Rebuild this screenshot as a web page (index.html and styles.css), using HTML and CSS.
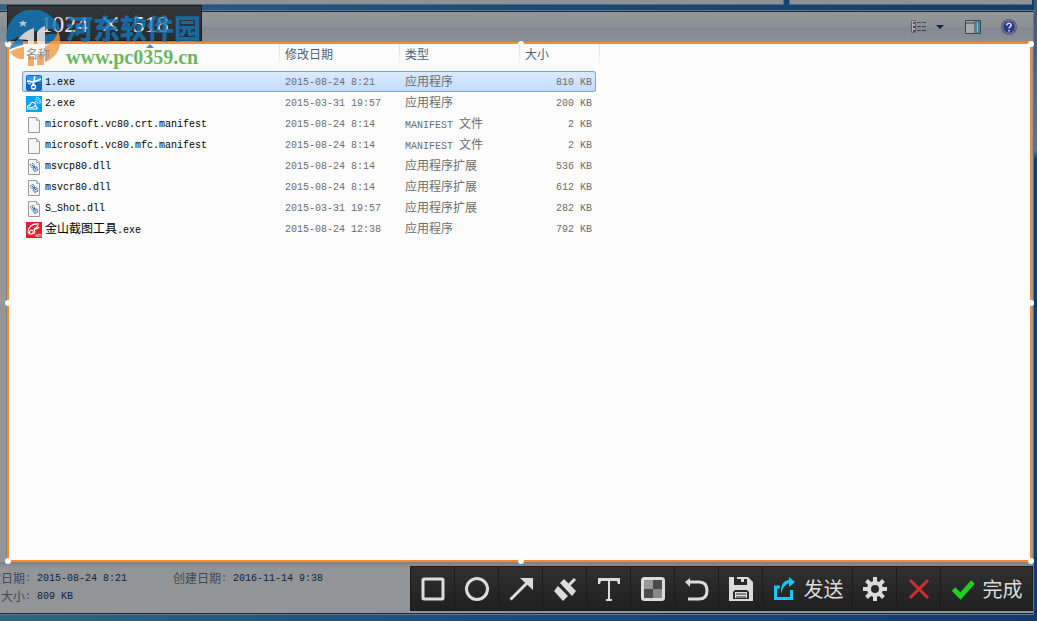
FILE: index.html
```html
<!DOCTYPE html>
<html lang="zh-CN">

<head>
    <meta charset="UTF-8">
    <meta name="viewport" content="width=device-width, initial-scale=1.0">
    <title>金山截图工具</title>
    <link rel="stylesheet" href="styles.css">
</head>

<body>
    <svg class="symbols" aria-hidden="true">
        <symbol id="page" viewBox="0 0 16 16">
            <path d="M2.500 .5h8l3 3v12h-11z" fill="#f7f7f7" stroke="#999" />
            <path d="M10.500 .5v3h3" fill="#ddd" stroke="#aaa" />
        </symbol>
        <symbol id="dll" viewBox="0 0 16 16">
            <path d="M2.500 .5h8l3 3v12h-11z" fill="#f7f7f7" stroke="#999" />
            <path d="M10.500 .5v3h3" fill="#ddd" stroke="#aaa" />
            <circle cx="6.500" cy="6.500" r="2" fill="#d5e8f7" stroke="#40709f" stroke-dasharray="2 .6" />
            <circle cx="9.500" cy="10" r="2.300" fill="#b5d3ee" stroke="#315f91" stroke-dasharray="2 .6" />
            <path d="M6 6l4 4" stroke="#315f91" />
        </symbol>
    </svg>

    <div class="behind">
        <div class="pane pane-left"></div>
        <div class="pane pane-right"></div>
    </div>

    <div class="window">
        <div class="command-bar">
            <button class="bar-btn" aria-label="更改视图">
                <svg width="34" height="16" viewBox="0 0 34 16">
                    <rect x=".5" y="1.500" width="4" height="12" rx="1" fill="#a9adb2" stroke="#555f70" />
                    <path d="M2 3h2v2H2z" fill="#287044" />
                    <path d="M2 7h2v2H2z" fill="#a32222" />
                    <path d="M2 11h2v2H2z" fill="#284f96" />
                    <path d="M6 3.500h4m1 0h4M6 7.500h4m1 0h4M6 11.500h4m1 0h4" stroke="#3d4856" />
                    <path d="M25 6h8l-4 4z" fill="#10273f" />
                </svg>
            </button>
            <button class="bar-btn" aria-label="显示预览窗格">
                <svg width="16" height="16" viewBox="0 0 16 16">
                    <path d="M.5 1.500h15v13H.5z" fill="#aaa" stroke="#35475a" />
                    <path d="M1 4h9M10 2v12" stroke="#35475a" />
                    <path d="M11 2h4v12h-4z" fill="#4a8798" />
                    <path d="M12 4h1v9h-1z" fill="#8cb9c2" />
                </svg>
            </button>
            <button class="bar-btn" aria-label="帮助">
                <svg width="16" height="16" viewBox="0 0 16 16">
                    <circle cx="8" cy="8" r="7.300" fill="#26398e" stroke="#62636a" stroke-width="1.400" />
                    <circle cx="8" cy="8" r="6.200" fill="none" stroke="#9499a5" stroke-width=".8" />
                    <path d="M5.800 6.300Q6 4.300 8 4.300T10.200 6.100Q10.200 7.200 8.900 7.900Q8 8.400 8 9.600M8 11v1.500" fill="none" stroke="#dde" stroke-width="1.600" />
                </svg>
            </button>
        </div>

        <div class="content">
            <div class="nav-edge"></div>
            <div class="selection">
                <table class="files">
                    <thead>
                        <tr>
                            <th class="col-name">名称<span class="sort"></span></th>
                            <th class="col-date">修改日期</th>
                            <th class="col-type">类型</th>
                            <th class="col-size">大小</th>
                        </tr>
                    </thead>
                    <tbody>
                        <tr class="selected">
                            <td><div class="file">
                                <svg class="app-icon" viewBox="0 0 16 16">
                                    <rect width="16" height="16" rx="2" fill="#1267c2" />
                                    <path d="M1 1h14v6H1z" fill="#2f9de8" />
                                    <path d="M1 6l6 1 1 4M15 4L8 7M9 1L7 10" fill="none" stroke="#fff" stroke-width="1.500" />
                                    <circle cx="3.500" cy="7.500" r="1.500" fill="none" stroke="#fff" />
                                    <circle cx="7.500" cy="12" r="2" fill="none" stroke="#fff" stroke-width="1.300" />
                                </svg>1.exe</div></td>
                            <td>2015-08-24 8:21</td>
                            <td><span class="zh">应用程序</span></td>
                            <td>810 KB</td>
                        </tr>
                        <tr>
                            <td><div class="file">
                                <svg class="app-icon" viewBox="0 0 16 16">
                                    <rect width="16" height="16" fill="#08a2ef" />
                                    <path d="M2 13q-2-3 2-4 1-4 5-2 1 2 0 3 3 1 2 3zM3 11q4 2 7-2" fill="none" stroke="#fff" stroke-width="1.200" />
                                    <path d="M9 5q3 0 3 3M9 3q5 0 5 5M10 1q5 1 5 6" fill="none" stroke="#d8f3ff" stroke-width=".8" />
                                </svg>2.exe</div></td>
                            <td>2015-03-31 19:57</td>
                            <td><span class="zh">应用程序</span></td>
                            <td>200 KB</td>
                        </tr>
                        <tr>
                            <td><div class="file"><svg class="app-icon"><use href="#page" /></svg>microsoft.vc80.crt.manifest</div></td>
                            <td>2015-08-24 8:14</td>
                            <td>MANIFEST <span class="zh">文件</span></td>
                            <td>2 KB</td>
                        </tr>
                        <tr>
                            <td><div class="file"><svg class="app-icon"><use href="#page" /></svg>microsoft.vc80.mfc.manifest</div></td>
                            <td>2015-08-24 8:14</td>
                            <td>MANIFEST <span class="zh">文件</span></td>
                            <td>2 KB</td>
                        </tr>
                        <tr>
                            <td><div class="file"><svg class="app-icon"><use href="#dll" /></svg>msvcp80.dll</div></td>
                            <td>2015-08-24 8:14</td>
                            <td><span class="zh">应用程序扩展</span></td>
                            <td>536 KB</td>
                        </tr>
                        <tr>
                            <td><div class="file"><svg class="app-icon"><use href="#dll" /></svg>msvcr80.dll</div></td>
                            <td>2015-08-24 8:14</td>
                            <td><span class="zh">应用程序扩展</span></td>
                            <td>612 KB</td>
                        </tr>
                        <tr>
                            <td><div class="file"><svg class="app-icon"><use href="#dll" /></svg>S_Shot.dll</div></td>
                            <td>2015-03-31 19:57</td>
                            <td><span class="zh">应用程序扩展</span></td>
                            <td>282 KB</td>
                        </tr>
                        <tr>
                            <td><div class="file">
                                <svg class="app-icon" viewBox="0 0 16 16">
                                    <rect width="16" height="16" fill="#e3202b" />
                                    <path d="M13 2Q3 1 2 10q2 4 5 1 1-3-2-3-2 1-1 3M12 3q-1 3-4 4 4 0 5-2M8 7q2 4-1 5" fill="none" stroke="#fff" stroke-width="1.100" />
                                    <path d="M10 15v-3l2 3v-3M13 15v-3h2v3" fill="none" stroke="#ffb9bd" stroke-width=".8" />
                                </svg><span><span class="zh">金山截图工具</span>.exe</span></div></td>
                            <td>2015-08-24 12:38</td>
                            <td><span class="zh">应用程序</span></td>
                            <td>792 KB</td>
                        </tr>
                    </tbody>
                </table>
                <i class="handle top left"></i>
                <i class="handle top center"></i>
                <i class="handle top right"></i>
                <i class="handle middle left"></i>
                <i class="handle middle right"></i>
                <i class="handle bottom left"></i>
                <i class="handle bottom center"></i>
                <i class="handle bottom right"></i>
            </div>
        </div>

        <div class="details">
            <dl class="info">
                <dt><span class="zh">修改日期</span>:</dt>
                <dd>2015-08-24 8:21</dd>
                <dt><span class="zh">创建日期</span>:</dt>
                <dd>2016-11-14 9:38</dd>
                <dt><span class="zh">大小</span>:</dt>
                <dd>809 KB</dd>
            </dl>

            <div class="snip-bar">
                <button class="tool" aria-label="矩形">
                    <svg viewBox="0 0 24 24"><rect x="2" y="2" width="20" height="20" rx="1" class="line" /></svg>
                </button>
                <button class="tool" aria-label="椭圆">
                    <svg viewBox="0 0 24 24"><circle cx="12" cy="12" r="10.500" class="line" /></svg>
                </button>
                <button class="tool" aria-label="箭头">
                    <svg viewBox="0 0 24 24">
                        <path d="M1.500 22.500L19 5" class="line" />
                        <path d="M11 1h13v12z" class="solid" />
                    </svg>
                </button>
                <button class="tool" aria-label="画刷">
                    <svg viewBox="0 0 24 24">
                        <path d="M1 14l4-5 10 10-5 5z" class="solid" />
                        <path d="M7 6l4-4 12 12-4 5z" class="solid" />
                        <path d="M15 9l7-7" stroke="#dcdcdc" stroke-width="3" />
                    </svg>
                </button>
                <button class="tool" aria-label="文字">
                    <svg viewBox="0 0 24 24">
                        <path d="M1 1h22v6h-2l-1-3H4L3 7H1z" class="solid" />
                        <path d="M12 2v20M9 23h6" class="line thin" />
                    </svg>
                </button>
                <button class="tool" aria-label="马赛克">
                    <svg viewBox="0 0 24 24">
                        <rect x="1.500" y="1.500" width="21" height="21" rx="2" fill="#999" stroke="#dcdcdc" stroke-width="3" />
                        <path d="M12 3h9v9h-9zM3 12h9v9H3z" fill="#4b4b4b" />
                        <path d="M12 12h9v9h-9z" fill="#888" />
                    </svg>
                </button>
                <button class="tool" aria-label="撤销">
                    <svg viewBox="0 0 24 24">
                        <path d="M3 5h11q8 0 8 8.500T14 22H3" class="line" />
                        <path d="M0 5l5-4v9z" class="solid" />
                    </svg>
                </button>
                <button class="tool" aria-label="保存">
                    <svg viewBox="0 0 24 24">
                        <path d="M0 0h19l5 5v19H0z" class="solid" />
                        <path d="M5 0v8h13V2h-3v3h-3V2H8V0zM6 13h12l2 2v7H4v-7z" fill="#292929" />
                        <path d="M6 15h12v6H6z" class="solid" />
                        <path d="M7 17h10M7 20h10" stroke="#292929" />
                    </svg>
                </button>
                <button class="tool wide">
                    <svg viewBox="0 0 24 24">
                        <path d="M8 10H3.500v11.500h16V13" fill="none" stroke="#00cfff" stroke-width="3" />
                        <path d="M9 17Q8 4 17 3V0l6 5-6 5V6Q11 8 9 17z" fill="#00cfff" />
                    </svg>
                    <span>发送</span>
                </button>
                <button class="tool" aria-label="设置">
                    <svg viewBox="0 0 24 24">
                        <path d="M12 0v24M0 12h24M3.500 3.500l17 17M20.500 3.500l-17 17" stroke="#dcdcdc" stroke-width="4" />
                        <circle cx="12" cy="12" r="8" class="solid" />
                        <circle cx="12" cy="12" r="4" fill="#292929" />
                    </svg>
                </button>
                <button class="tool" aria-label="取消">
                    <svg viewBox="0 0 24 24"><path d="M3 3l18 18M21 3L3 21" stroke="#cf2f2f" stroke-width="3" /></svg>
                </button>
                <button class="tool done">
                    <svg viewBox="0 0 24 24"><path d="M2.500 12l7 7L22 5" fill="none" stroke="#20d020" stroke-width="5" /></svg>
                    <span>完成</span>
                </button>
            </div>
        </div>
    </div>

    <div class="size-tip"><span>1024</span><span class="times">×</span><span>518</span></div>

    <div class="watermark">
        <svg class="logo" width="58" height="58" viewBox="0 0 58 58">
            <path d="M1 33A27 27 0 0 1 47 8Q54 14 54 21Q44 17 30 21Q9 27 1 33z" fill="#1478bd" />
            <path d="M3 40Q5 31 17 27v8Q8 37 3 40z" fill="#1478bd" />
            <path d="M4 42Q10 38 18 37v12Q9 50 4 42z" fill="#f39a43" />
            <path d="M52 20Q60 43 38 53V37Q50 31 52 20z" fill="#f39a43" />
            <path d="M38 25q8-2 13-1-3 8-13 11z" fill="#1478bd" />
            <path d="M12 29q8-9 16-11v38l-6-2V30zM31 22q4-5 8-6v40h-8z" fill="#f5f7f9" />
            <path d="M22 46h6v10h-6zM31 44h7v11h-7z" fill="#f39a43" />
            <path d="M17 10l1 2h3l-2 2 1 3-3-2-3 2 1-3-2-2h3z" fill="#dceaf5" />
        </svg>
        <div class="brand">
            <div class="brand-name">河东软件园</div>
            <div class="brand-url">www.pc0359.cn</div>
        </div>
    </div>
</body>

</html>
```
FILE: styles.css
```css
* {
    box-sizing: border-box;
    padding: 0;
    margin: 0;
}

body {
    display: flex;
    flex-direction: column;
    height: 100vh;
    overflow: hidden;
    position: relative;
    background:
        linear-gradient(#3d5878, #66717d 150px, transparent 160px) right top / 3px 100% no-repeat,
        linear-gradient(to right, #2f6482, #1a4b78 50%, #123b69);
    font: 10px/18px "Liberation Mono", "Noto Sans CJK SC", monospace;
    color: #6d6d6d;
}

button {
    border: 0;
    background: none;
    font: inherit;
    color: inherit;
}

.symbols {
    position: absolute;
    width: 0;
    height: 0;
}

.zh {
    font: 12px/16px "Noto Sans CJK SC", sans-serif;
}

/* windows behind */
.behind {
    display: flex;
    gap: 5px;
    height: 10px;
    padding-right: 5px;
}

.pane {
    height: 5px;
    background: #8e9296;
    border-bottom: 1px solid #53687a;
}

.pane-left {
    flex: 1;
    border-right: 1px solid #53687a;
}

.pane-right {
    flex: 0 0 243px;
    border-left: 1px solid #53687a;
}

/* explorer window */
.window {
    flex: 1;
    display: flex;
    flex-direction: column;
    min-height: 0;
    margin: 0 3px 6px 0;
    border: solid #617789;
    border-width: 1px 1px 1px 0;
    background: #929497;
}

.command-bar {
    display: flex;
    justify-content: flex-end;
    align-items: center;
    gap: 20px;
    height: 31px;
    padding: 0 16px 0 0;
    border-top: 1px solid #17293b;
    background: linear-gradient(#949798, #8b9095 50%, #828992 52%, #8a9098);
}

.bar-btn {
    display: flex;
}

.content {
    flex: 1;
    display: flex;
    min-height: 0;
}

.nav-edge {
    width: 7px;
    background: #979797;
    border-right: 1px solid #7d8288;
}

.selection {
    flex: 1;
    position: relative;
    margin-right: 1px;
    border: 2px solid #fb8b32;
    background: #fcfcfc;
}

.handle {
    position: absolute;
    width: 6px;
    height: 6px;
    border-radius: 50%;
    background: #fff;
}

.top { top: -3px; }
.middle { top: calc(50% - 2px); }
.bottom { bottom: -4px; }
.left { left: -4px; }
.center { left: calc(50% - 2px); }
.right { right: -4px; }

/* file list */
.files {
    width: 574px;
    margin-left: 13px;
    border-collapse: collapse;
    table-layout: fixed;
}

.files th {
    position: relative;
    z-index: 1;
    height: 27px;
    padding: 0 0 8px 5px;
    text-align: left;
    font: 12px/18px "Noto Sans CJK SC", sans-serif;
    color: #4c607a;
}

.files th::after {
    content: "";
    position: absolute;
    top: 0;
    right: 0;
    width: 1px;
    height: 19px;
    background: linear-gradient(#d5e3f0, #eef3f8);
}

.files .col-name { width: 258px; padding-left: 4px; color: #8d8d8d; }
.files .col-date { width: 120px; }
.files .col-type { width: 120px; }
.files .col-size::after { right: -4px; }

.sort {
    position: absolute;
    top: 0;
    left: 50%;
    margin-left: -5px;
    border: solid transparent;
    border-width: 0 4px 4px;
    border-bottom-color: #5b8ba8;
}

.files td {
    height: 21px;
    padding: 2px 4px 0 5px;
    line-height: 16px;
    white-space: nowrap;
}

.files td:first-child {
    padding-left: 4px;
    color: #000;
}

.files td:last-child {
    text-align: right;
}

.files .selected {
    outline: 1px solid #7da2ce;
    outline-offset: -1px;
    border-radius: 3px;
    background: linear-gradient(#dcebfc, #c1dbfc);
}

.file {
    display: flex;
    align-items: center;
    gap: 3px;
}

.app-icon {
    width: 16px;
    height: 16px;
}

/* details pane */
.details {
    display: flex;
    justify-content: space-between;
    height: 52px;
    border-bottom: 1px solid #17293b;
    background: linear-gradient(#77828c, #929497 6px);
}

.info {
    display: grid;
    grid-template-columns: 31px 130px 54px 110px;
    grid-auto-rows: 18px;
    column-gap: 6px;
    padding-top: 8px;
    overflow: hidden;
}

.info dt {
    display: flex;
    justify-content: flex-end;
    white-space: nowrap;
    color: #3e4957;
}

.info dd {
    color: #10233c;
}

/* screenshot toolbar */
.snip-bar {
    display: flex;
    height: 45px;
    margin-top: 4px;
    border: 1px solid #1b1b1b;
    background: linear-gradient(#303030, #202020);
}

.tool {
    display: flex;
    align-items: center;
    justify-content: center;
    gap: 8px;
    width: 44px;
    border-right: 1px solid #1c1c1c;
    color: #dcdcdc;
    font: 20px/24px "Noto Sans CJK SC", sans-serif;
}

.tool svg {
    width: 24px;
    height: 24px;
}

.wide { width: 90px; }
.done { width: 91px; border-right: 0; }

.line {
    fill: none;
    stroke: #dcdcdc;
    stroke-width: 3;
}

.thin { stroke-width: 2; }
.solid { fill: #dcdcdc; }

/* selection size */
.size-tip {
    position: absolute;
    top: 5px;
    left: 7px;
    display: flex;
    justify-content: center;
    gap: 12px;
    width: 195px;
    height: 36px;
    border: 1px solid #1d1d1d;
    background: linear-gradient(#343637, #292b2d);
    color: #e4e4e4;
    font: 24px/36px "Liberation Serif", serif;
}

.times {
    font-size: 36px;
}

/* watermark */
.watermark {
    position: absolute;
    top: 10px;
    left: 6px;
    display: flex;
    gap: 2px;
    opacity: 0.8;
}

.brand-name {
    padding-top: 3px;
    font: 900 27px/30px "Noto Sans CJK SC", sans-serif;
    color: #1478bd;
}

.brand-url {
    font: bold 20px/28px "Liberation Serif", serif;
    color: #45a83a;
}
```
